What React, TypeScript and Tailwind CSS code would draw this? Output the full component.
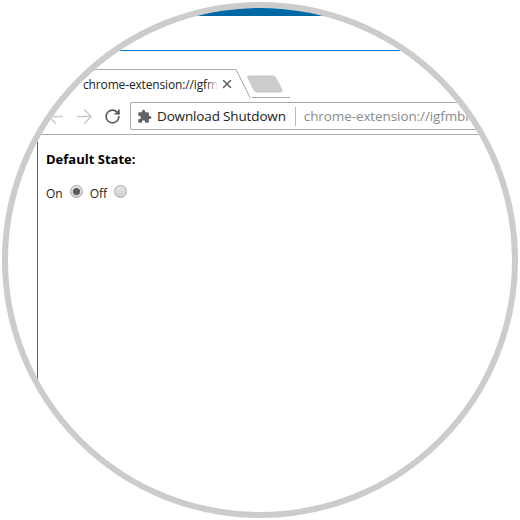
import { ArrowLeft, ArrowRight, RotateCw, X } from 'lucide-react';
import { MdExtension } from 'react-icons/md';

const Radio = ({ checked }: { checked?: boolean }) => (
  <span className="flex h-[13px] w-[13px] items-center justify-center rounded-full border border-[#a8a8a8] bg-gradient-to-b from-[#e6e6e6] to-[#cfcfcf]">
    {checked && <span className="h-[7px] w-[7px] rounded-full bg-[#5a5a5a]" />}
  </span>
);

const App = () => {
  return (
    <div className="h-[520px] w-[520px] bg-white p-[2px] font-['Open_Sans',sans-serif]">
      <div className="h-[516px] w-[516px] overflow-hidden rounded-full border-[6px] border-[#cccccc] bg-white">
        <div className="h-[8px] bg-[#0069a5]" />
        <div className="mt-[34px] h-[1px] bg-[#0078d7]" />

        {/* tab strip */}
        <div className="mt-[18px] flex h-[29px] items-end">
          <div className="relative h-[29px] w-[244px] shrink-0">
            <svg className="absolute inset-0" width="244" height="29" fill="none">
              <path d="M0 0.5H228L242 28.5" stroke="#a8a8a8" />
            </svg>
            <div className="absolute left-[75px] top-[7px] whitespace-nowrap text-[12px] leading-[18px] tracking-[-0.15px] text-[#222]">
              chrome-extension://igfm
              <div className="absolute inset-y-0 right-0 w-[12px] bg-gradient-to-r from-transparent to-white" />
            </div>
            <X className="absolute left-[212px] top-[8px] text-[#5f5f5f]" size={14} strokeWidth={2.5} />
          </div>
          <div className="relative h-[29px] w-[38px] border-b border-[#a8a8a8]">
            <svg className="absolute left-[-5px] top-[6px]" width="38" height="20">
              <path d="M1 1H26Q28 1 29 3L35 15Q36 17 33 17H10Q8 17 7 15L1 3Q0 1 1 1Z" fill="#cccccc" stroke="#c8c8c8" />
            </svg>
          </div>
        </div>

        {/* toolbar */}
        <div className="flex h-[37px] items-center border-b border-[#aaaaaa] pl-[36px]">
          <ArrowLeft className="text-[#c8c8c8]" size={23} strokeWidth={1.5} />
          <ArrowRight className="ml-[6px] text-[#c8c8c8]" size={23} strokeWidth={1.5} />
          <RotateCw className="ml-[8px] text-[#5a5a5a]" size={17} strokeWidth={2.4} />
          <div className="ml-[9px] flex h-[28px] flex-1 items-center rounded-l-[2px] border border-r-0 border-[#a8a8a8] pl-[6px] whitespace-nowrap">
            <MdExtension className="text-[#5f6368]" size={15} />
            <span className="ml-[5px] text-[13.5px] tracking-[-0.15px] text-[#222]">Download Shutdown</span>
            <span className="ml-[9px] h-[19px] w-[1px] bg-[#bbbbbb]" />
            <span className="ml-[8px] text-[13.5px] tracking-[-0.1px] text-[#8a8a8a]">chrome-extension://igfmbr</span>
          </div>
        </div>

        {/* page */}
        <div className="ml-[29px] h-[400px] border-l border-l-[#0078d7] pl-[8px] pt-[15px]">
          <div className="text-[13px] font-bold leading-[18px] text-black">Default State:</div>
          <div className="mt-[15px] flex items-center text-[12px] leading-[16px] text-[#222]">
            <span className="mt-[3px]">On</span>
            <span className="ml-[7px] -mt-[3px]"><Radio checked /></span>
            <span className="ml-[7px] mt-[3px]">Off</span>
            <span className="ml-[7px] -mt-[3px]"><Radio /></span>
          </div>
        </div>
      </div>
    </div>
  );
};

export default App;
